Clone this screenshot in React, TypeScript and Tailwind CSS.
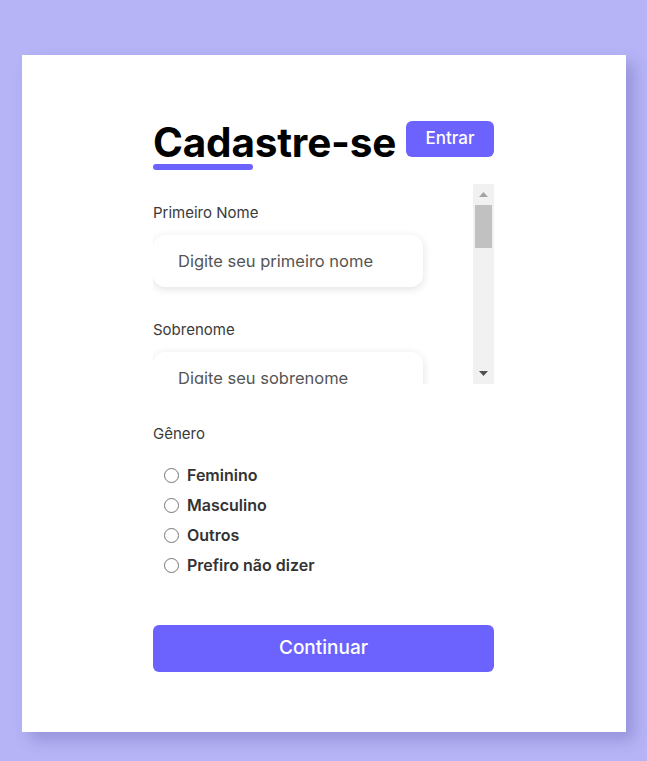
import React, { useRef, useState } from "react";

const fields = [
  { name: "firstname", label: "Primeiro Nome", placeholder: "Digite seu primeiro nome", type: "text" },
  { name: "lastname", label: "Sobrenome", placeholder: "Digite seu sobrenome", type: "text" },
  { name: "email", label: "E-mail", placeholder: "Digite seu e-mail", type: "email" },
  { name: "number", label: "Celular", placeholder: "(xx) xxxx-xxxx", type: "tel" },
  { name: "password", label: "Senha", placeholder: "Digite sua senha", type: "password" },
  { name: "confirmPassword", label: "Confirme sua Senha", placeholder: "Digite sua senha novamente", type: "password" },
];

const genders = [
  { id: "female", label: "Feminino" },
  { id: "male", label: "Masculino" },
  { id: "others", label: "Outros" },
  { id: "none", label: "Prefiro não dizer" },
];

const TRACK = 158;
const THUMB = 43;

const App = () => {
  const [formData, setFormData] = useState<Record<string, string>>({});
  const [gender, setGender] = useState("");
  const [thumbTop, setThumbTop] = useState(0);
  const scrollRef = useRef<HTMLDivElement>(null);

  // Handle input changes
  const handleChange = (e: React.ChangeEvent<HTMLInputElement>) => {
    setFormData({ ...formData, [e.target.name]: e.target.value });
  };

  // Keep the fake scrollbar thumb in sync with the list
  const handleScroll = (e: React.UIEvent<HTMLDivElement>) => {
    const el = e.currentTarget;
    const max = el.scrollHeight - el.clientHeight;
    setThumbTop(max > 0 ? (el.scrollTop / max) * (TRACK - THUMB) : 0);
  };

  const scrollBy = (dy: number) => {
    scrollRef.current?.scrollBy({ top: dy });
  };

  return (
    <div className="min-h-screen w-full bg-[#b6b4f6] pt-[55px] pb-[29px] font-['Inter',sans-serif]">
      <div className="mx-auto w-[604px] h-[677px] bg-white shadow-[8px_8px_14px_rgba(60,50,140,0.25)] pt-[64px]">
        <form className="mx-auto w-[341px]" onSubmit={(e) => e.preventDefault()}>
          {/* Header */}
          <div className="flex items-start justify-between">
            <div>
              <h1 className="text-[40.5px] leading-[48px] font-bold text-black tracking-[-0.2px]">Cadastre-se</h1>
              <div className="w-[100px] h-[6px] rounded-full bg-[#6c63ff] -mt-[3px]" />
            </div>
            <button
              type="button"
              className="mt-[2px] w-[88px] h-[36px] rounded-md bg-[#6c63ff] text-white text-[17px] font-medium"
            >
              Entrar
            </button>
          </div>

          {/* Scrollable inputs */}
          <div className="mt-[14px] flex h-[200px]">
            <div
              ref={scrollRef}
              onScroll={handleScroll}
              className="flex-1 overflow-y-scroll pt-[19px] [scrollbar-width:none] [&::-webkit-scrollbar]:hidden"
            >
              {fields.map((f) => (
                <div key={f.name} className="mb-[33px]">
                  <label htmlFor={f.name} className="block text-[15px] leading-[20px] text-[#3a3a3a] mb-3">
                    {f.label}
                  </label>
                  <input
                    id={f.name}
                    name={f.name}
                    type={f.type}
                    value={formData[f.name] || ""}
                    onChange={handleChange}
                    placeholder={f.placeholder}
                    className="w-[270px] h-[52px] rounded-[12px] bg-white pl-[25px] text-[16.5px] text-[#333] placeholder:text-[#555] shadow-[0_2px_8px_rgba(0,0,0,0.12)] outline-none"
                  />
                </div>
              ))}
            </div>

            {/* Scrollbar */}
            <div className="w-[21px] flex flex-col bg-[#f1f1f1]">
              <button type="button" onClick={() => scrollBy(-40)} className="h-[21px] flex items-center justify-center">
                <svg width="9" height="5" viewBox="0 0 9 5">
                  <polygon points="4.5,0 9,5 0,5" fill="#a3a3a3" />
                </svg>
              </button>
              <div className="relative flex-1">
                <div
                  className="absolute left-[2px] right-[2px] h-[43px] bg-[#c1c1c1]"
                  style={{ top: thumbTop }}
                />
              </div>
              <button type="button" onClick={() => scrollBy(40)} className="h-[21px] flex items-center justify-center">
                <svg width="9" height="5" viewBox="0 0 9 5">
                  <polygon points="0,0 9,0 4.5,5" fill="#505050" />
                </svg>
              </button>
            </div>
          </div>

          {/* Gender */}
          <div className="mt-[40px]">
            <p className="text-[15px] leading-[20px] text-[#3a3a3a]">Gênero</p>
            <div className="mt-[21px] flex flex-col gap-[10px] pl-[11px]">
              {genders.map((g) => (
                <label key={g.id} className="flex items-center gap-[8px] h-[20px] cursor-pointer">
                  <input
                    type="radio"
                    name="gender"
                    checked={gender === g.id}
                    onChange={() => setGender(g.id)}
                    className="m-0 w-[15px] h-[15px]"
                  />
                  <span className="text-[16px] font-semibold text-[#333]">{g.label}</span>
                </label>
              ))}
            </div>
          </div>

          {/* Submit */}
          <button
            type="submit"
            className="mt-[50px] w-full h-[47px] rounded-md bg-[#6c63ff] text-white text-[19px] font-medium"
          >
            Continuar
          </button>
        </form>
      </div>
    </div>
  );
};

export default App;
